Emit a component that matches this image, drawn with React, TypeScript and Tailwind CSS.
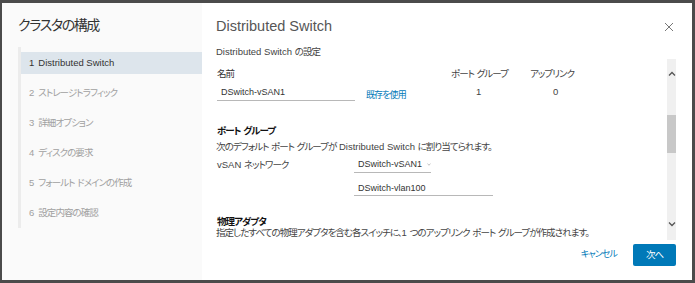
import React from "react";

const font = "font-['Liberation_Sans','Noto_Sans_CJK_JP',sans-serif] [font-feature-settings:'palt']";

// Japanese runs are set a little tighter than the Latin text around them.
function J({ children }: { children: string }) {
  const parts = children.split(/([\u3000-\u30ff\u4e00-\u9fff\uff00-\uffef]+)/);
  return (
    <>
      {parts.map((p, i) =>
        i % 2 === 1 ? (
          <span key={i} className="tracking-[-0.1em]">
            {p}
          </span>
        ) : (
          p
        ),
      )}
    </>
  );
}

const steps = [
  "Distributed Switch",
  "ストレージトラフィック",
  "詳細オプション",
  "ディスクの要求",
  "フォールト ドメインの作成",
  "設定内容の確認",
];

function Chevron({ up }: { up?: boolean }) {
  return (
    <svg width="8" height="6" viewBox="0 0 8 6" className="text-[#555]">
      <path
        d={up ? "M1 4.5 L4 1.5 L7 4.5" : "M1 1.5 L4 4.5 L7 1.5"}
        fill="none"
        stroke="currentColor"
        strokeWidth="1.3"
      />
    </svg>
  );
}

function Sidebar() {
  return (
    <aside className="w-[200px] shrink-0 bg-[#fafafa] flex flex-col">
      <h1 className="pl-4 pt-[12px] text-[14px] leading-[20px] text-[#333]">
        <J>クラスタの構成</J>
      </h1>
      <div className="mt-[12px] ml-4 flex h-[181px] border-l-[3px] border-[#ececec]">
        <nav className="flex flex-col gap-[8px] w-full pt-[5px]">
          {steps.map((s, i) => (
            <div
              key={s}
              className={
                "h-[22px] flex items-center gap-[4px] pl-[8px] text-[9.5px] " +
                (i === 0 ? "bg-[#dde5ec] text-[#333]" : "text-[#a0a0a0]")
              }
            >
              <span>{i + 1}</span>
              <span>
                <J>{s}</J>
              </span>
            </div>
          ))}
        </nav>
      </div>
    </aside>
  );
}

function Underlined({ w, children, h }: { w: string; h: string; children: React.ReactNode }) {
  return (
    <div
      className={`${w} ${h} flex items-center whitespace-nowrap border-b border-[#b8b8b8] pl-[4px] text-[9px] text-[#333]`}
    >
      {children}
    </div>
  );
}

function Content() {
  return (
    <div className="flex-1 min-w-0 text-[9.5px] leading-[12px] text-[#444] whitespace-nowrap">
      <div className="grid grid-cols-[235px_79px_60px] mt-[9px]">
        <div className="pl-[1px] text-[#333]">
          <J>名前</J>
        </div>
        <div>
          <J>ポート グループ</J>
        </div>
        <div>
          <J>アップリンク</J>
        </div>
      </div>
      <div className="grid grid-cols-[235px_79px_60px] mt-[4px]">
        <div className="flex items-end gap-[11px] pl-[1px]">
          <Underlined w="w-[138px]" h="h-[17px]">DSwitch-vSAN1</Underlined>
          <a className="text-[#0079b8] text-[9px]">
            <J>既存を使用</J>
          </a>
        </div>
        <div className="pl-[25px] mt-[2px]">1</div>
        <div className="pl-[23px] mt-[2px]">0</div>
      </div>

      <div className="mt-[24px] pl-[1px] font-bold text-[#111]">
        <J>ポート グループ</J>
      </div>
      <div className="mt-[4px]">
        <J>次のデフォルト ポート グループが Distributed Switch に割り当てられます。</J>
      </div>
      <div className="flex mt-[3px] pl-[1px]">
        <div className="w-[137px] pt-[3px]">
          <J>vSAN ネットワーク</J>
        </div>
        <div className="flex flex-col gap-[8px]">
          <Underlined w="w-[77px]" h="h-[17px]">
            <span>DSwitch-vSAN1</span>
            <svg width="8" height="5" viewBox="0 0 8 5" className="ml-[5px] text-[#777]">
              <path d="M1 1 L4 4 L7 1" fill="none" stroke="currentColor" strokeWidth="1" />
            </svg>
          </Underlined>
          <Underlined w="w-[139px]" h="h-[15px]">DSwitch-vlan100</Underlined>
        </div>
      </div>

      <div className="mt-[20px] pl-[1px] font-bold text-[#111]">
        <J>物理アダプタ</J>
      </div>
      <div className="-mt-[1px]">
        <J>指定したすべての物理アダプタを含む各スイッチに、1 つのアップリンク ポート グループが作成されます。</J>
      </div>
    </div>
  );
}

export default function App() {
  return (
    <div className={`w-[695px] h-[283px] bg-[#4b4b4b] pt-[3px] pl-[2px] pr-[3px] pb-[3px] ${font}`}>
      <div className="flex h-[277px] w-[690px] overflow-hidden">
        <Sidebar />
        <section className="flex-1 bg-white flex flex-col pl-[14px] pr-[16px]">
          <header className="flex items-center justify-between pt-[13px] h-[33px]">
            <h2 className="text-[14.5px] leading-[20px] text-[#565656]">Distributed Switch</h2>
            <svg width="10" height="10" viewBox="0 0 10 10" className="mr-[2px] mt-[1px] text-[#777]">
              <path d="M1 1 L9 9 M9 1 L1 9" stroke="currentColor" strokeWidth="1" />
            </svg>
          </header>
          <div className="mt-[10px] text-[9.5px] leading-[12px] text-[#444]">
            <J>Distributed Switch の設定</J>
          </div>
          <div className="flex h-[181px] mt-[1px] overflow-hidden">
            <Content />
            <div className="w-[9px] shrink-0 bg-[#f0f0f0] flex flex-col items-center">
              <div className="h-[28px] flex items-center justify-center pt-[1px]">
                <Chevron up />
              </div>
              <div className="mt-[28px] h-[38px] w-full bg-[#c8c8c8]" />
              <div className="flex-1" />
              <div className="h-[28px] flex items-center justify-center pb-[4px]">
                <Chevron />
              </div>
            </div>
          </div>
          <footer className="flex items-center justify-end gap-[16px] pt-[4px]">
            <button className="text-[9px] text-[#0079b8]">
              <J>キャンセル</J>
            </button>
            <button className="w-[43px] h-[22px] bg-[#0079b8] text-white text-[9.5px] rounded-[2px]">
              <J>次へ</J>
            </button>
          </footer>
        </section>
      </div>
    </div>
  );
}
